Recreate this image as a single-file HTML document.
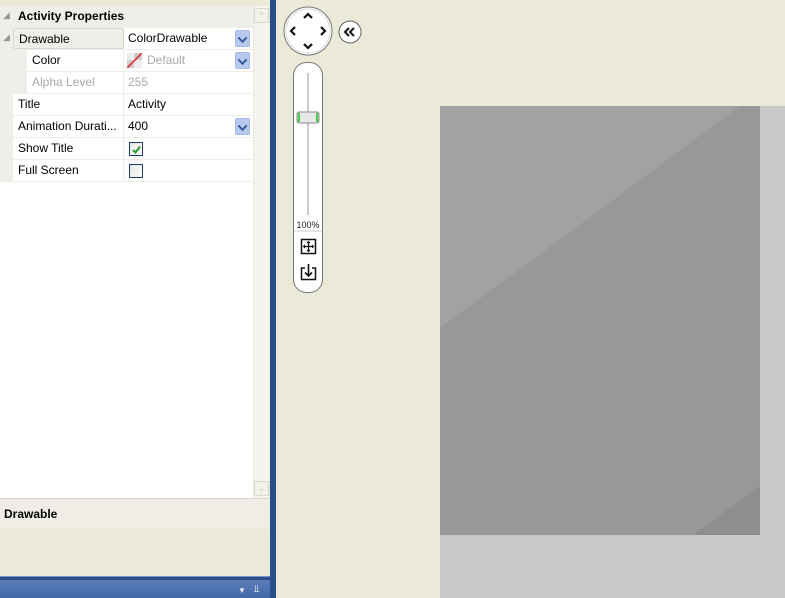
<!DOCTYPE html>
<html><head><meta charset="utf-8"><style>
*{margin:0;padding:0;box-sizing:border-box}
body{width:785px;height:598px;overflow:hidden;background:#ebe9d8;font-family:"Liberation Sans",Tahoma,sans-serif;font-size:12px;color:#000;position:relative}
.abs{position:absolute}
.row{position:absolute;left:0;width:253px;height:22px;border-bottom:1px solid #eeede8}
.lab{position:absolute;left:13px;width:111px;height:21px;line-height:21px;padding-left:5px;border-right:1px solid #eeede8;white-space:nowrap;overflow:hidden;background:#fff}
.val{position:absolute;left:125px;right:0;height:21px;line-height:21px;padding-left:3px;background:#fff}
.dd{position:absolute;right:3px;top:2px;width:15px;height:17px;background:#b8c9f0;border-radius:2px;border:1px solid #a8bbe6}
.dd:after{content:"";position:absolute;left:3px;top:5px;width:5px;height:5px;border-right:2px solid #3a5a9a;border-bottom:2px solid #3a5a9a;transform:rotate(45deg) translate(-1px,-1px)}
.cb{position:absolute;left:4px;top:4px;width:14px;height:14px;border:1px solid #1c3f78;background:linear-gradient(135deg,#e6e5df,#fff)}
.tri{position:absolute;left:3px;color:#999;font-size:9px}
</style></head><body>
<!-- left panel -->
<div class="abs" style="left:0;top:0;width:270px;height:6px;background:#ebe9d8"></div>
<div class="abs" style="left:0;top:6px;width:253px;height:492px;background:#fff"></div>
<div class="abs" style="left:0;top:6px;width:13px;height:176px;background:#efefea"></div>
<div class="abs" style="left:0;top:6px;width:253px;height:22px;background:#efefea;font-weight:bold;line-height:21px;padding-left:18px">Activity Properties</div>
<div class="tri" style="top:10px">&#9698;</div>
<div class="row" style="top:28px"><div class="lab" style="background:#efeee8;border:1px solid #d8d6cc;border-radius:2px">Drawable</div><div class="val">ColorDrawable<div class="dd"></div></div></div>
<div class="tri" style="top:32px">&#9698;</div>
<div class="row" style="top:50px"><div class="abs" style="left:13px;width:14px;height:22px;background:#efefea"></div><div class="lab" style="left:27px;width:97px;padding-left:5px">Color</div><div class="val" style="color:#a8a8a8;padding-left:22px"><svg class="abs" style="left:2px;top:3px" width="15" height="15"><rect width="15" height="15" fill="#ccc"/><rect width="7" height="7" fill="#eee"/><rect x="7" y="7" width="8" height="8" fill="#eee"/><line x1="0" y1="15" x2="15" y2="0" stroke="#e22" stroke-width="1.5"/></svg>Default<div class="dd"></div></div></div>
<div class="row" style="top:72px"><div class="abs" style="left:13px;width:14px;height:22px;background:#efefea"></div><div class="lab" style="left:27px;width:97px;color:#a8a8a8">Alpha Level</div><div class="val" style="color:#a8a8a8">255</div></div>
<div class="row" style="top:94px"><div class="lab">Title</div><div class="val">Activity</div></div>
<div class="row" style="top:116px"><div class="lab">Animation Durati...</div><div class="val">400<div class="dd"></div></div></div>
<div class="row" style="top:138px"><div class="lab">Show Title</div><div class="val"><div class="cb"><svg class="abs" style="left:2px;top:2px" width="9" height="9"><path d="M1 5 L3.5 7.5 L8 1.5" stroke="#2a9a2a" stroke-width="2" fill="none"/></svg></div></div></div>
<div class="row" style="top:160px"><div class="lab">Full Screen</div><div class="val"><div class="cb"></div></div></div>
<!-- scrollbar -->
<div class="abs" style="left:253px;top:6px;width:16px;height:492px;background:#f4f3ee;border-left:1px solid #eceae0"></div>
<div class="abs" style="left:254px;top:8px;width:15px;height:15px;background:#f2f1ea;border:1px solid #d9d7cc;border-radius:2px;color:#c8c6bc;font-size:9px;text-align:center;line-height:15px">&#8963;</div>
<div class="abs" style="left:254px;top:481px;width:15px;height:15px;background:#f2f1ea;border:1px solid #d9d7cc;border-radius:2px;color:#c8c6bc;font-size:9px;text-align:center;line-height:13px">&#8964;</div>
<!-- description -->
<div class="abs" style="left:0;top:498px;width:270px;height:1px;background:#d8d6c8"></div>
<div class="abs" style="left:0;top:499px;width:270px;height:30px;background:#efede5;font-weight:bold;padding:8px 4px">Drawable</div>
<div class="abs" style="left:0;top:529px;width:270px;height:47px;background:#ebe9d8"></div>
<div class="abs" style="left:0;top:576px;width:270px;height:1px;background:#7a93c0"></div>
<div class="abs" style="left:0;top:577px;width:276px;height:3px;background:#2b4d8c"></div>
<div class="abs" style="left:0;top:580px;width:270px;height:18px;background:linear-gradient(#5a7db8,#4569a8)"></div>
<div class="abs" style="left:238px;top:586px;color:#dfe6f4;font-size:8px">&#9660;</div>
<div class="abs" style="left:254px;top:584px;color:#fff;font-size:10px">&#x2AEB;</div>
<div class="abs" style="left:270px;top:0;width:6px;height:598px;background:#2b4d8c"></div>
<!-- canvas -->
<svg class="abs" style="left:440px;top:106px" width="345" height="492">
<rect width="345" height="492" fill="#c8c8c6"/>
<rect width="320" height="429" fill="#989898"/>
<polygon points="0,0 300,0 0,222" fill="#a2a2a2"/>
<polygon points="320,380 320,429 253,429" fill="#8e8e8e"/>
</svg>
<!-- nav controls -->
<svg class="abs" style="left:283px;top:5px" width="82" height="290">
<circle cx="25" cy="26" r="24" fill="#fff" stroke="#777" stroke-width="1"/>
<circle cx="25" cy="26" r="22" fill="none" stroke="#ddd" stroke-width="1"/>
<path d="M21 13 L25 9 L29 13 M21 39 L25 43 L29 39 M12 22 L8 26 L12 30 M38 22 L42 26 L38 30" stroke="#111" stroke-width="2.2" fill="none"/>
<circle cx="67" cy="27" r="11" fill="#fff" stroke="#666"/>
<path d="M66 23 L62 27 L66 31 M71 23 L67 27 L71 31" stroke="#111" stroke-width="2" fill="none"/>
<rect x="10.5" y="57.5" width="29" height="230" rx="13" fill="#fff" stroke="#777"/>
<line x1="25" y1="68" x2="25" y2="210" stroke="#ccc" stroke-width="2"/>
<rect x="14" y="107" width="22" height="11" rx="2" fill="#e8e8e8" stroke="#888"/>
<rect x="15" y="108" width="2" height="9" fill="#4c4"/><rect x="33" y="108" width="2" height="9" fill="#4c4"/>
<text x="25" y="223" font-family="Liberation Sans,sans-serif" font-size="9" text-anchor="middle" fill="#222">100%</text>
<line x1="11" y1="226" x2="39" y2="226" stroke="#ccc"/>
<rect x="18.5" y="234.5" width="14" height="14" fill="none" stroke="#111" stroke-width="1.5"/>
<path d="M25.5 237 V246 M21 241.5 H30" stroke="#111" stroke-width="1.3"/>
<path d="M24 238 L25.5 236.5 L27 238 M24 245 L25.5 246.5 L27 245 M22 240 L20.5 241.5 L22 243 M29 240 L30.5 241.5 L29 243" stroke="#111" fill="none"/>
<path d="M22 263 H18.5 V274.5 H32.5 V263 H29" stroke="#111" stroke-width="1.5" fill="none"/>
<path d="M25.5 259 V271 M22 267.5 L25.5 271 L29 267.5" stroke="#111" stroke-width="1.6" fill="none"/>
</svg>
</body></html>
